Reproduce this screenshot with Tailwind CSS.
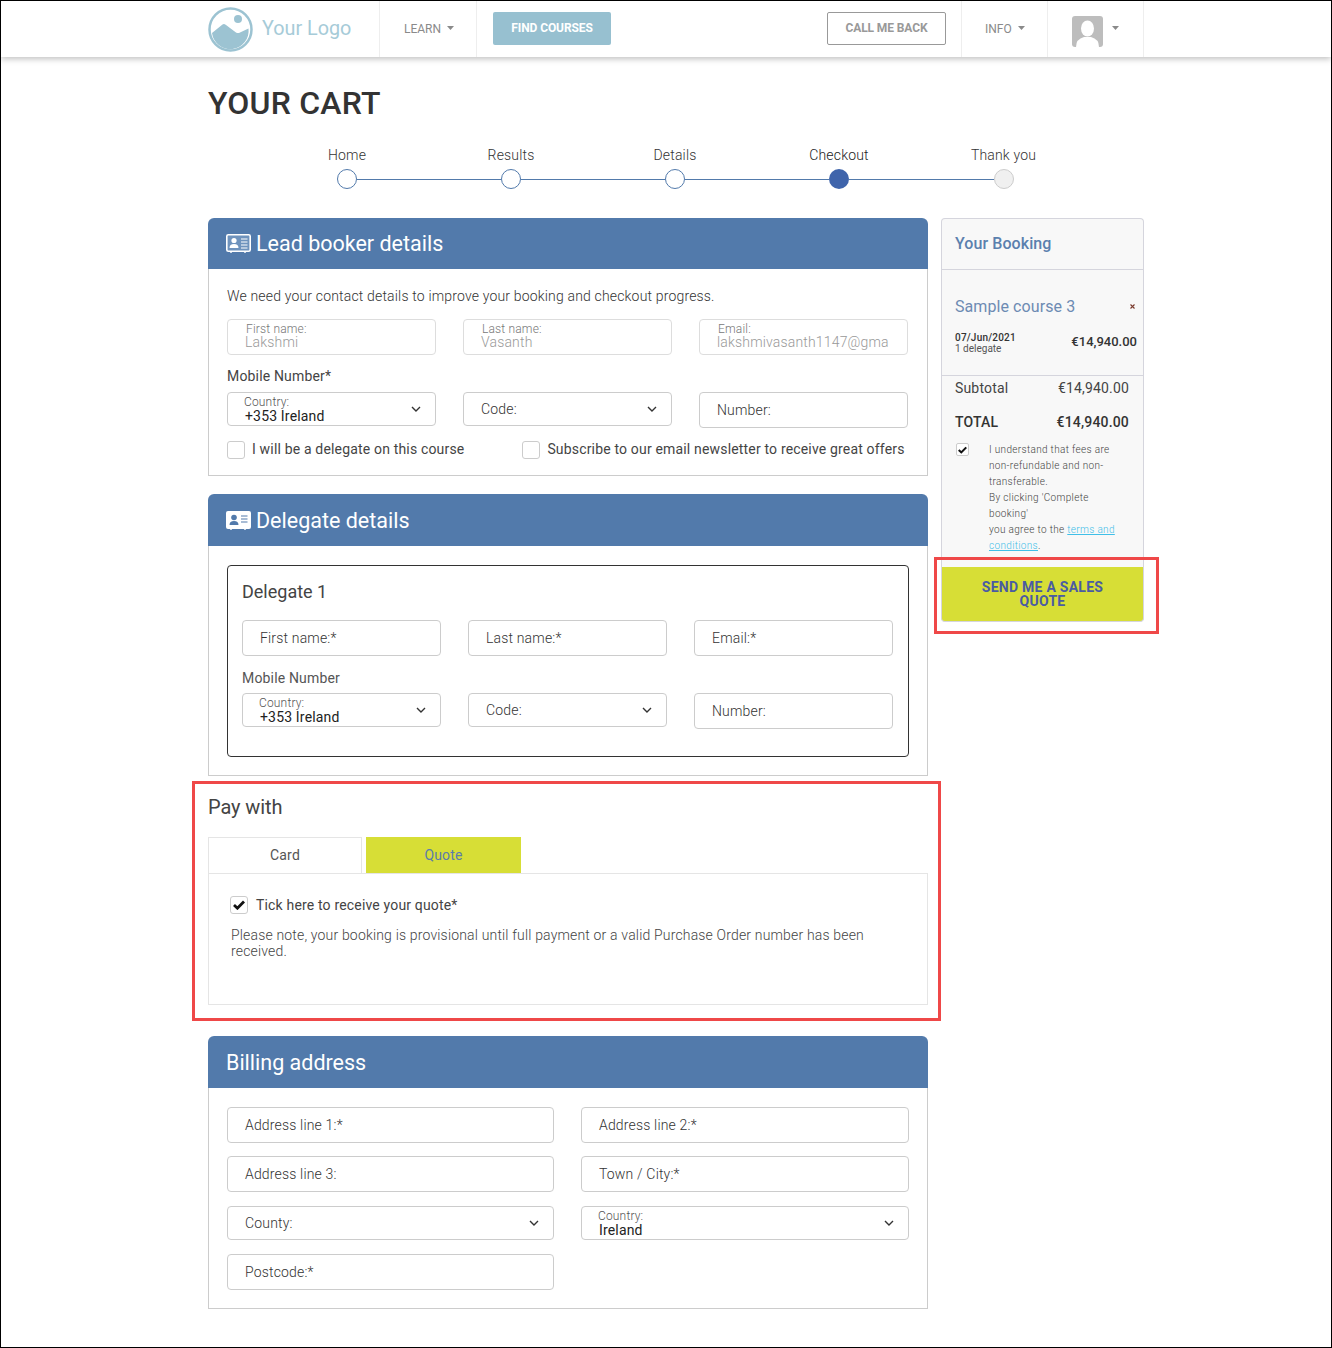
<!DOCTYPE html>
<html lang="en">
<head>
<meta charset="utf-8">
<title>Your Cart</title>
<script src="https://cdn.jsdelivr.net/npm/@tailwindcss/browser@4"></script>
</head>
<body class="bg-white">
<div class="w-[1332px] h-[1348px] border border-black font-['Roboto',sans-serif] text-[#333] text-sm font-light tracking-[0.17px] overflow-hidden">

  <!-- top bar -->
  <header class="h-[56px] bg-white shadow-[0_2px_6px_rgba(0,0,0,0.25)] relative tracking-normal">
    <div class="ml-[207px] w-[936px] h-full flex items-stretch">
      <div class="w-[172px] border-r border-[#eee] flex items-center">
        <svg width="45" height="45" viewBox="0 0 45 45" class="shrink-0"><circle cx="22.5" cy="22.5" r="21" fill="none" stroke="#9cc3d2" stroke-width="2.5"/><circle cx="30" cy="12" r="4" fill="#9cc3d2"/><path d="M4 26 L14.5 17.5 Q16 16.5 18 18 L28 25.5 Q30 26.5 32 25.5 L40.5 21.5 A18 18 0 0 1 4 26Z" fill="#9cc3d2"/></svg>
        <span class="ml-[9px] text-[19.8px] font-normal text-[#a6cbd8]">Your Logo</span>
      </div>
      <div class="w-[97px] border-r border-[#eee] flex items-center pl-6 text-xs font-normal text-[#8a8a8a]">LEARN<svg width="7" height="4" viewBox="0 0 7 4" class="ml-[6px] mb-[2px]"><path d="M0 0h7L3.500 4z" fill="#8a8a8a"/></svg></div>
      <div class="flex items-start pl-4 pt-[11px]">
        <div class="w-[118px] h-[33px] pb-[2px] rounded-[2px] bg-[#97c0d0] text-white text-xs font-bold tracking-[-0.1px] flex items-center justify-center">FIND COURSES</div>
      </div>
      <div class="ml-auto flex items-start pt-[11px]">
        <div class="w-[119px] h-[33px] pb-[2px] rounded-[2px] border border-[#999] text-[#999] text-xs font-bold tracking-[-0.1px] flex items-center justify-center">CALL ME BACK</div>
      </div>
      <div class="ml-[15px] w-[87px] border-x border-[#eee] flex items-center pl-[23px] text-xs font-normal text-[#8a8a8a]">INFO<svg width="7" height="4" viewBox="0 0 7 4" class="ml-[6px] mb-[2px]"><path d="M0 0h7L3.500 4z" fill="#8a8a8a"/></svg></div>
      <div class="w-[96px] border-r border-[#eee] flex items-start pl-6 pt-[15px]">
        <svg width="31" height="31" viewBox="0 0 31 31"><rect width="31" height="31" rx="3" fill="#bdbdbd"/><ellipse cx="15.5" cy="12.5" rx="6.5" ry="8" fill="#fff"/><path d="M4 31 Q4 23 12 21 L19 21 Q27 23 27 31Z" fill="#fff"/></svg>
        <svg width="7" height="4" viewBox="0 0 7 4" class="ml-[9px] mt-[10px]"><path d="M0 0h7L3.500 4z" fill="#8a8a8a"/></svg>
      </div>
    </div>
  </header>

  <main class="ml-[207px] w-[936px]">
    <h1 class="mt-[26px] h-10 leading-10 text-[32px] font-medium tracking-[0.2px] text-[#333]">YOUR CART</h1>

    <!-- stepper -->
    <div class="mt-[22px] ml-[57px] flex h-5 leading-5">
      <span class="w-[164px] text-center">Home</span>
      <span class="w-[164px] text-center">Results</span>
      <span class="w-[164px] text-center">Details</span>
      <span class="w-[164px] text-center text-[#222]">Checkout</span>
      <span class="w-[165px] text-center">Thank you</span>
    </div>
    <div class="mt-1 ml-[129px] flex items-center h-5">
      <span class="w-5 h-5 rounded-full border-[1.5px] border-[#527aab] bg-white shrink-0"></span>
      <span class="w-[144px] h-px bg-[#527aab]"></span>
      <span class="w-5 h-5 rounded-full border-[1.5px] border-[#527aab] bg-white shrink-0"></span>
      <span class="w-[144px] h-px bg-[#527aab]"></span>
      <span class="w-5 h-5 rounded-full border-[1.5px] border-[#527aab] bg-white shrink-0"></span>
      <span class="w-[144px] h-px bg-[#527aab]"></span>
      <span class="w-5 h-5 rounded-full bg-[#3f64ab] shrink-0"></span>
      <span class="w-[145px] h-px bg-[#527aab]"></span>
      <span class="w-5 h-5 rounded-full border-[1.5px] border-[#ccc] bg-[#f0f0f0] shrink-0"></span>
    </div>

    <div class="mt-[29px] flex items-start">
      <!-- main column -->
      <div class="w-[720px] shrink-0">

        <!-- lead booker -->
        <section>
          <div class="h-[51px] rounded-t-[6px] bg-[#527aab] text-white flex items-center pl-[18px]">
            <svg width="25" height="19" viewBox="0 0 25 19" class="shrink-0"><rect x="0.8" y="0.8" width="23.4" height="16.4" rx="1.500" fill="#6f93bd" stroke="#fff" stroke-width="1.600"/><circle cx="8" cy="6.500" r="2.600" fill="#fff"/><path d="M3.500 14 Q3.500 10 8 10 Q12.500 10 12.500 14Z" fill="#fff"/><path d="M15 5h6.500M15 8h6.500M15 11h6.500M15 14h6.500" stroke="#fff" stroke-width="1.200"/><path d="M5 17.500v1.500M19 17.500v1.500" stroke="#fff" stroke-width="1.400"/></svg>
            <h2 class="ml-[5px] pt-[2px] text-[21.5px] font-normal tracking-normal">Lead booker details</h2>
          </div>
          <div class="border-x border-b border-[#ccc] pl-[18px] pr-[19px] pt-[17px] pb-4">
            <p class="h-5 leading-5">We need your contact details to improve your booking and checkout progress.</p>
            <div class="mt-[13px] grid grid-cols-3 gap-x-[27px]">
              <div class="h-9 rounded-[4px] border border-[#ddd] pl-[17px] pt-[3px] overflow-hidden"><div class="text-xs leading-[12px] text-[#777] pl-px">First name:</div><div class="leading-[14px] text-[#999]">Lakshmi</div></div>
              <div class="h-9 rounded-[4px] border border-[#ddd] pl-[17px] pt-[3px] overflow-hidden"><div class="text-xs leading-[12px] text-[#777] pl-px">Last name:</div><div class="leading-[14px] text-[#999]">Vasanth</div></div>
              <div class="h-9 rounded-[4px] border border-[#ddd] pl-[17px] pr-[17px] pt-[3px] overflow-hidden whitespace-nowrap"><div class="text-xs leading-[12px] text-[#777] pl-px">Email:</div><div class="leading-[14px] text-[#999]">lakshmivasanth1147@gma</div></div>
            </div>
            <div class="mt-[11px] h-5 leading-5 font-normal text-[#444]">Mobile Number*</div>
            <div class="mt-[6px] grid grid-cols-3 gap-x-[27px] items-start">
              <div class="h-[34px] rounded-[4px] border border-[#ccc] pl-4 pr-[14px] flex items-center justify-between overflow-hidden"><div class="pt-[2px]"><div class="text-xs leading-[12px] text-[#555]">Country:</div><div class="leading-[16px] font-normal text-[#222] pl-px">+353 Ireland</div></div><svg width="10" height="6" viewBox="0 0 10 6"><path d="M1 1l4 4 4-4" fill="none" stroke="#333" stroke-width="1.400"/></svg></div>
              <div class="h-[34px] rounded-[4px] border border-[#ccc] pl-[17px] pr-[14px] flex items-center justify-between"><span>Code:</span><svg width="10" height="6" viewBox="0 0 10 6"><path d="M1 1l4 4 4-4" fill="none" stroke="#333" stroke-width="1.400"/></svg></div>
              <div class="h-9 rounded-[4px] border border-[#ccc] pl-[17px] flex items-center">Number:</div>
            </div>
            <div class="mt-[13px] flex items-center h-[18px]">
              <span class="w-[18px] h-[18px] rounded-[3px] border border-[#ccc] bg-white shrink-0"></span>
              <span class="ml-[7px] mt-[-2px] font-normal text-[#444]">I will be a delegate on this course</span>
              <span class="ml-[58px] w-[18px] h-[18px] rounded-[3px] border border-[#ccc] bg-white shrink-0"></span>
              <span class="ml-[7px] mt-[-2px] font-normal text-[#444] whitespace-nowrap">Subscribe to our email newsletter to receive great offers</span>
            </div>
          </div>
        </section>

        <!-- delegate -->
        <section class="mt-[18px]">
          <div class="h-[52px] rounded-t-[6px] bg-[#527aab] text-white flex items-center pl-[18px]">
            <svg width="25" height="19" viewBox="0 0 25 19" class="shrink-0"><rect width="25" height="18" rx="2" fill="#fff"/><circle cx="8" cy="6.500" r="2.800" fill="#527aab"/><path d="M3.500 14 Q3.500 10 8 10 Q12.500 10 12.500 14Z" fill="#527aab"/><path d="M15 5h6.500M15 8h6.500M15 11h6.500" stroke="#527aab" stroke-width="1.200"/><path d="M5 17v2M19 17v2" stroke="#fff" stroke-width="1.400"/></svg>
            <h2 class="ml-[5px] pt-[2px] text-[21.5px] font-normal tracking-normal">Delegate details</h2>
          </div>
          <div class="border-x border-b border-[#ccc] px-[18px] pt-[19px] pb-[18px]">
            <div class="h-[192px] rounded-[4px] border border-[#333] pl-[14px] pr-[15px] pt-[13px]">
              <h3 class="h-[26px] leading-[26px] text-lg font-normal tracking-normal text-[#444]">Delegate 1</h3>
              <div class="mt-[15px] grid grid-cols-3 gap-x-[27px]">
                <div class="h-9 rounded-[4px] border border-[#ccc] pl-[17px] flex items-center">First name:*</div>
                <div class="h-9 rounded-[4px] border border-[#ccc] pl-[17px] flex items-center">Last name:*</div>
                <div class="h-9 rounded-[4px] border border-[#ccc] pl-[17px] flex items-center">Email:*</div>
              </div>
              <div class="mt-3 h-5 leading-5 font-normal text-[#555]">Mobile Number</div>
              <div class="mt-[5px] grid grid-cols-3 gap-x-[27px] items-start">
                <div class="h-[34px] rounded-[4px] border border-[#ccc] pl-4 pr-[14px] flex items-center justify-between overflow-hidden"><div class="pt-[2px]"><div class="text-xs leading-[12px] text-[#555]">Country:</div><div class="leading-[16px] font-normal text-[#222] pl-px">+353 Ireland</div></div><svg width="10" height="6" viewBox="0 0 10 6"><path d="M1 1l4 4 4-4" fill="none" stroke="#333" stroke-width="1.400"/></svg></div>
                <div class="h-[34px] rounded-[4px] border border-[#ccc] pl-[17px] pr-[14px] flex items-center justify-between"><span>Code:</span><svg width="10" height="6" viewBox="0 0 10 6"><path d="M1 1l4 4 4-4" fill="none" stroke="#333" stroke-width="1.400"/></svg></div>
                <div class="h-9 rounded-[4px] border border-[#ccc] pl-[17px] flex items-center">Number:</div>
              </div>
            </div>
          </div>
        </section>

        <!-- pay with -->
        <section class="relative">
          <h2 class="pt-[17px] h-[45px] leading-[28px] text-xl font-normal tracking-[-0.1px] text-[#444]">Pay with</h2>
          <div class="mt-4 flex h-9">
            <div class="w-[154px] pb-[2px] border-x border-t border-[#e5e5e5] flex items-center justify-center text-[#555] font-normal">Card</div>
            <div class="ml-1 w-[155px] bg-[#d7de36] flex items-center justify-center text-[#5b7cab] font-normal">Quote</div>
          </div>
          <div class="h-[132px] border border-[#e5e5e5] pl-[22px] pt-[22px]">
            <div class="-ml-px flex items-center h-[18px]">
              <span class="w-[18px] h-[18px] rounded-[3px] border border-[#ccc] bg-white shrink-0 flex items-center justify-center"><svg width="12" height="10" viewBox="0 0 12 10"><path d="M1 5l3.400 3.200L11 1.500" fill="none" stroke="#111" stroke-width="2.800"/></svg></span>
              <span class="ml-2 font-normal text-[#444]">Tick here to receive your quote*</span>
            </div>
            <p class="mt-[13px] w-[650px] leading-4 text-[#444]">Please note, your booking is provisional until full payment or a valid Purchase Order number has been received.</p>
          </div>
          <div class="absolute left-[-16px] top-[5px] w-[749px] h-[240px] border-[3px] border-[#ef4848] pointer-events-none"></div>
        </section>

        <!-- billing -->
        <section class="mt-[31px]">
          <div class="h-[52px] rounded-t-[6px] bg-[#527aab] text-white flex items-center pl-[18px]">
            <h2 class="pt-[2px] text-[21.5px] font-normal tracking-normal">Billing address</h2>
          </div>
          <div class="border-x border-b border-[#ccc] pl-[18px] pr-[18px] pt-[19px] pb-[18px] grid grid-cols-[327px_328px] gap-x-[27px]">
            <div class="h-9 rounded-[4px] border border-[#ccc] pl-[17px] flex items-center">Address line 1:*</div>
            <div class="h-9 rounded-[4px] border border-[#ccc] pl-[17px] flex items-center">Address line 2:*</div>
            <div class="mt-[13px] h-9 rounded-[4px] border border-[#ccc] pl-[17px] flex items-center">Address line 3:</div>
            <div class="mt-[13px] h-9 rounded-[4px] border border-[#ccc] pl-[17px] flex items-center">Town / City:*</div>
            <div class="mt-[14px] h-[34px] rounded-[4px] border border-[#ccc] pl-[17px] pr-[14px] flex items-center justify-between"><span>County:</span><svg width="10" height="6" viewBox="0 0 10 6"><path d="M1 1l4 4 4-4" fill="none" stroke="#333" stroke-width="1.400"/></svg></div>
            <div class="mt-[14px] h-[34px] rounded-[4px] border border-[#ccc] pl-4 pr-[14px] flex items-center justify-between overflow-hidden"><div class="pt-[2px]"><div class="text-xs leading-[12px] text-[#555]">Country:</div><div class="leading-[16px] font-normal text-[#222] pl-px">Ireland</div></div><svg width="10" height="6" viewBox="0 0 10 6"><path d="M1 1l4 4 4-4" fill="none" stroke="#333" stroke-width="1.400"/></svg></div>
            <div class="mt-[14px] h-9 rounded-[4px] border border-[#ccc] pl-[17px] flex items-center">Postcode:*</div>
          </div>
        </section>
      </div>

      <!-- sidebar -->
      <aside class="ml-[13px] w-[203px] shrink-0 relative">
        <div class="rounded-t-[4px] border-x border-t border-[#d5d5dd] bg-[#f8f8f8] h-[349px]">
          <div class="h-[51px] border-b border-[#d5d5dd] pl-[13px] flex items-center text-base font-medium tracking-[0.08px] text-[#5b80ae]">Your Booking</div>
          <div class="h-[106px] border-b border-[#d5d5dd] pl-[13px] pr-[6px] pt-[25px]">
            <div class="h-6 flex items-center justify-between">
              <span class="text-base font-normal tracking-[0.08px] text-[#6d8bb3]">Sample course 3</span>
              <svg width="5" height="5" viewBox="0 0 5 5" class="mr-[2px] mt-[-2px]"><path d="M0.500 0.500l4 4M4.500 0.500l-4 4" stroke="#7a3b2e" stroke-width="1.100"/></svg>
            </div>
            <div class="mt-[13px] flex items-center justify-between">
              <div class="text-[10px] leading-[11px] tracking-[0.2px]"><div class="font-medium text-[#333]">07/Jun/2021</div><div class="font-normal tracking-normal text-[#555]">1 delegate</div></div>
              <span class="text-[13px] font-medium tracking-normal text-[#333] mt-[-1px]">€14,940.00</span>
            </div>
          </div>
          <div class="pl-[13px] pr-[14px] pt-[2px]">
            <div class="h-5 leading-5 flex justify-between font-normal text-[#444]"><span>Subtotal</span><span>€14,940.00</span></div>
            <div class="mt-[14px] h-5 leading-5 flex justify-between font-medium text-[#333]"><span>TOTAL</span><span>€14,940.00</span></div>
            <div class="mt-[10px] flex items-start">
              <span class="mt-px ml-px w-[13px] h-[13px] rounded-[2px] border border-[#ccc] bg-white shrink-0 flex items-center justify-center"><svg width="9" height="8" viewBox="0 0 12 10"><path d="M1 5l3.400 3.200L11 1.500" fill="none" stroke="#111" stroke-width="2.800"/></svg></span>
              <p class="ml-5 text-[10px] leading-4 tracking-[0.33px] text-[#444] whitespace-nowrap">I understand that fees are<br>non-refundable and non-<br>transferable.<br>By clicking 'Complete<br>booking'<br>you agree to the <span class="text-[#3fbfe8] underline">terms and</span><br><span class="text-[#3fbfe8] underline">conditions</span>.</p>
            </div>
          </div>
        </div>
        <button class="block w-[203px] h-[55px] rounded-b-[4px] bg-[#d7de36] border-b border-x border-[#d5d5dd] text-sm leading-[14px] font-bold tracking-[0.25px] text-[#4a5ba3]">SEND ME A SALES<br>QUOTE</button>
        <div class="absolute left-[-7px] top-[339px] w-[225px] h-[77px] border-[3px] border-[#ef4848] pointer-events-none"></div>
      </aside>
    </div>
  </main>
</div>
</body>
</html>
